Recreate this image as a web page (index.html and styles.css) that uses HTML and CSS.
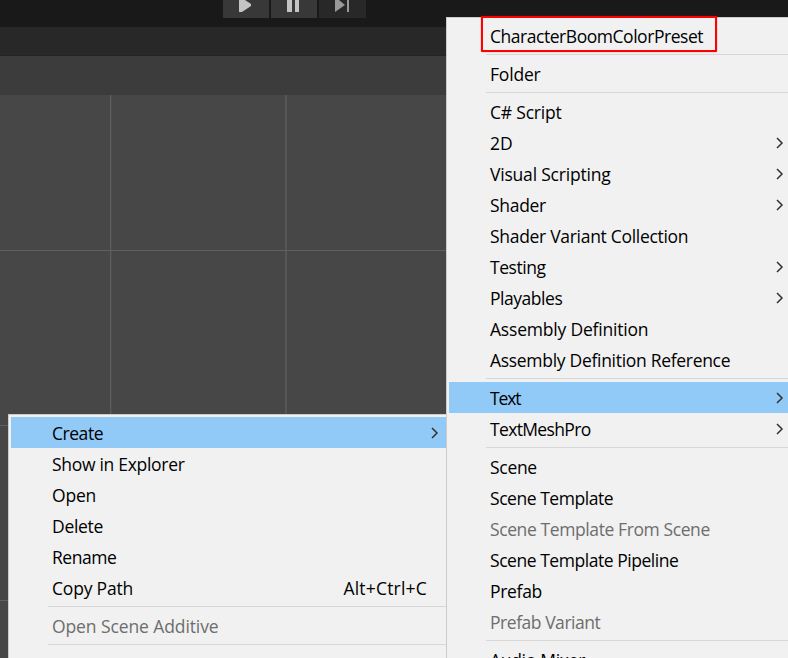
FILE: index.html
```html
<!DOCTYPE html>
<html lang="en">
<head>
<meta charset="utf-8">
<title>Create menu</title>
<link rel="stylesheet" href="styles.css">
</head>
<body>
<main class="editor">
  <header class="toolbar">
    <div class="tool"><svg width="46" height="18"><path d="M16 0H22L28 4V6L22 10L19 12H16Z" fill="#c4c4c4"/></svg></div>
    <div class="tool"><svg width="46" height="18"><path d="M16 0h5v12h-5zM24 0h4v12h-4z" fill="#c4c4c4"/></svg></div>
    <div class="tool dim"><svg width="47" height="18"><path d="M16 0H20L26 5L16 12ZM28 0h2v12h-2z" fill="#999"/></svg></div>
  </header>
  <div class="tabs"></div>
  <div class="scene-tools"></div>
  <svg class="scene" width="788" height="563"><path d="M110.700 0V563M286 0V563M0 155.500H788M0 330.500H788M0 505.500H788" stroke="#606060" stroke-width="1.200"/></svg>

  <nav class="menu context">
    <div class="item selected"><span class="tight">Create</span><svg class="arrow" width="8" height="12"><path d="M1 1L6 6L1 11"/></svg></div>
    <div class="item"><span>Show in Explorer</span></div>
    <div class="item"><span class="loose">Open</span></div>
    <div class="item"><span>Delete</span></div>
    <div class="item"><span class="tight">Rename</span></div>
    <div class="item"><span class="loose">Copy Path</span><span class="shortcut">Alt+Ctrl+C</span></div>
    <div class="separator"></div>
    <div class="item disabled"><span class="wide">Open Scene Additive</span></div>
    <div class="separator"></div>
    <div class="item"><span>View in Package Manager</span></div>
  </nav>

  <nav class="menu create">
    <div class="item"><span class="tight">CharacterBoomColorPreset</span></div>
    <div class="separator"></div>
    <div class="item"><span class="loose">Folder</span></div>
    <div class="separator"></div>
    <div class="item"><span class="loose">C# Script</span></div>
    <div class="item"><span class="wide">2D</span><svg class="arrow" width="8" height="12"><path d="M1 1L6 6L1 11"/></svg></div>
    <div class="item"><span class="loose">Visual Scripting</span><svg class="arrow" width="8" height="12"><path d="M1 1L6 6L1 11"/></svg></div>
    <div class="item"><span>Shader</span><svg class="arrow" width="8" height="12"><path d="M1 1L6 6L1 11"/></svg></div>
    <div class="item"><span>Shader Variant Collection</span></div>
    <div class="item"><span class="tight">Testing</span><svg class="arrow" width="8" height="12"><path d="M1 1L6 6L1 11"/></svg></div>
    <div class="item"><span class="tight">Playables</span><svg class="arrow" width="8" height="12"><path d="M1 1L6 6L1 11"/></svg></div>
    <div class="item"><span class="loose">Assembly Definition</span></div>
    <div class="item"><span>Assembly Definition Reference</span></div>
    <div class="separator"></div>
    <div class="item selected"><span class="tightest">Text</span><svg class="arrow" width="8" height="12"><path d="M1 1L6 6L1 11"/></svg></div>
    <div class="item"><span class="tighter">TextMeshPro</span><svg class="arrow" width="8" height="12"><path d="M1 1L6 6L1 11"/></svg></div>
    <div class="separator"></div>
    <div class="item"><span>Scene</span></div>
    <div class="item"><span class="tight">Scene Template</span></div>
    <div class="item disabled"><span class="snug">Scene Template From Scene</span></div>
    <div class="item"><span class="tight">Scene Template Pipeline</span></div>
    <div class="item"><span>Prefab</span></div>
    <div class="item disabled"><span class="tight">Prefab Variant</span></div>
    <div class="separator"></div>
    <div class="item"><span>Audio Mixer</span></div>
  </nav>
  <div class="highlight"></div>
</main>
</body>
</html>
```
FILE: styles.css
```css
* { box-sizing: border-box; }
body { margin: 0; overflow: hidden; }
.editor {
  position: relative;
  width: 788px;
  height: 658px;
  overflow: hidden;
  background: #474747;
  font: 17.5px/31px "Open Sans", "Noto Sans", sans-serif;
  letter-spacing: -0.3px;
  color: #000;
}
.toolbar { display: flex; gap: 2px; height: 27px; padding-left: 223px; background: #191919; }
.tool { width: 46px; height: 18px; background: #383838; }
.tool.dim { width: 47px; background: #282828; }
.tool svg { display: block; }
.tabs { height: 29px; background: #282828; border-bottom: 1px solid #232323; }
.scene-tools { height: 39px; background: #3c3c3c; }
.scene { display: block; }
.menu { position: absolute; background: #f1f1f1; border: 1px solid #ccc; padding: 2px; }
.context { left: 8px; top: 414px; width: 442px; height: 260px; }
.create { left: 446px; top: 17px; width: 360px; height: 660px; }
.item { display: flex; height: 31px; padding: 1px 0 0 41px; white-space: nowrap; }
.loose { letter-spacing: -0.2px; }
.wide { letter-spacing: -0.1px; }
.snug { letter-spacing: -0.4px; }
.tight { letter-spacing: -0.46px; }
.tighter { letter-spacing: -0.65px; }
.tightest { letter-spacing: -1.1px; }
.selected { background: #91c9f7; }
.disabled { color: #6d6d6d; }
.separator { height: 7px; margin-left: 37px; padding-top: 3px; }
.separator::before { content: ""; display: block; height: 1px; background: #d7d7d7; }
.shortcut { margin-left: auto; margin-right: 20px; letter-spacing: 0.2px; }
.context .item:last-child { padding-top: 2px; }
.arrow { margin: 9px 8px 0 auto; fill: none; stroke: #333; stroke-width: 1.5; }
.create .arrow { margin-right: 19px; }
.highlight { position: absolute; left: 481px; top: 16px; width: 236px; height: 36px; border: 2px solid #f00; box-shadow: 0 0 1px #f00; border-radius: 1px; }
```
